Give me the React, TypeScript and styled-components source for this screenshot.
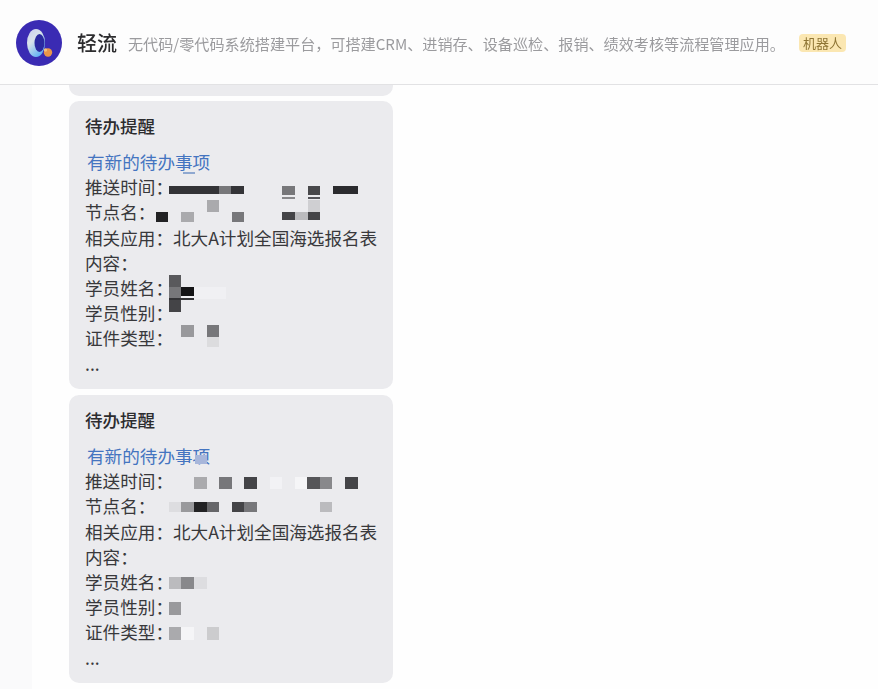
import styled, { createGlobalStyle } from 'styled-components';

type Tile = [number, number, number, number, string];

const FONT = `'Noto Sans CJK SC', 'Noto Sans', sans-serif`;

const firstTiles: Tile[] = [
  [114, 71, 12, 2, '#8fa8d0'],
  [100, 85, 50, 8, '#333336'],
  [150, 85, 12, 8, '#77777a'],
  [162, 85, 13, 8, '#343437'],
  [213, 85, 13, 9, '#77777a'],
  [239, 85, 12, 9, '#48484b'],
  [264, 85, 25, 8, '#2b2b2e'],
  [213, 96, 13, 2, '#88888b'],
  [239, 96, 12, 2, '#55555a'],
  [87, 111, 12, 10, '#222224'],
  [112, 111, 13, 10, '#aaaaad'],
  [138, 99, 12, 12, '#aaaaad'],
  [163, 111, 12, 10, '#77777a'],
  [239, 99, 12, 12, '#cfcfd2'],
  [213, 111, 13, 8, '#444447'],
  [226, 111, 13, 8, '#bbbbbe'],
  [239, 111, 12, 8, '#444447'],
  [112, 186, 45, 12, '#f0f0f3'],
  [100, 174, 12, 12, '#59595c'],
  [100, 186, 12, 13, '#77777a'],
  [112, 186, 13, 9, '#141416'],
  [100, 197, 25, 2, '#333336'],
  [100, 199, 12, 12, '#444447'],
  [112, 224, 13, 12, '#99999c'],
  [138, 224, 12, 12, '#77777a'],
  [138, 236, 12, 10, '#dcdcde'],
];

const secondTiles: Tile[] = [
  [126, 60, 12, 9, '#a7b6da'],
  [125, 82, 13, 12, '#aaaaad'],
  [150, 82, 13, 12, '#77777a'],
  [175, 82, 13, 12, '#444447'],
  [201, 82, 12, 12, '#f2f2f5'],
  [226, 82, 12, 12, '#f5f5f7'],
  [238, 82, 13, 12, '#555558'],
  [251, 82, 12, 12, '#88888b'],
  [276, 82, 13, 12, '#444447'],
  [100, 107, 12, 10, '#dddde0'],
  [112, 107, 13, 10, '#99999c'],
  [125, 107, 13, 10, '#222224'],
  [138, 107, 12, 10, '#666669'],
  [163, 107, 12, 10, '#444447'],
  [175, 107, 13, 10, '#77777a'],
  [251, 107, 12, 10, '#bbbbbe'],
  [100, 182, 12, 12, '#bbbbbe'],
  [112, 182, 13, 12, '#88888b'],
  [125, 182, 13, 12, '#dddde0'],
  [100, 207, 12, 13, '#99999c'],
  [100, 232, 12, 13, '#aaaaad'],
  [112, 232, 13, 13, '#f5f5f7'],
  [138, 232, 12, 13, '#ccccce'],
];

function Logo() {
  return (
    <svg width='46' height='46' viewBox='0 0 46 46'>
      <defs>
        <linearGradient id='ring' x1='0' y1='0' x2='0.6' y2='1'>
          <stop offset='0' stopColor='#c9cdf0' />
          <stop offset='0.45' stopColor='#d9e4ea' />
          <stop offset='1' stopColor='#63b2f4' />
        </linearGradient>
      </defs>
      <circle cx='23' cy='23' r='23' fill='#3a2bb3' />
      <ellipse cx='20' cy='23' rx='9' ry='14' fill='url(#ring)' />
      <ellipse cx='23.5' cy='23' rx='5' ry='9' fill='#2b2aa0' />
      <circle cx='32' cy='32.5' r='4.2' fill='#e9964a' />
      <circle cx='29.5' cy='30' r='1.7' fill='#f3c27c' />
    </svg>
  );
}

function ReminderCard({ tiles }: { tiles: Tile[] }) {
  return (
    <Card>
      <CardTitle>待办提醒</CardTitle>
      <CardLink>有新的待办事项</CardLink>
      <Line>推送时间：</Line>
      <Line>节点名：</Line>
      <AppLine>相关应用：北大A计划全国海选报名表</AppLine>
      <Line>内容：</Line>
      <Line>学员姓名：</Line>
      <Line>学员性别：</Line>
      <Line>证件类型：</Line>
      <Ellipsis>...</Ellipsis>
      {tiles.map(([x, y, w, h, color]) => (
        <MosaicTile
          key={`${x}-${y}-${color}`}
          style={{ left: x, top: y, width: w, height: h, background: color }}
        />
      ))}
    </Card>
  );
}

export default function App() {
  return (
    <Page>
      <GlobalStyle />
      <Header>
        <Logo />
        <AppName>轻流</AppName>
        <Description>
          无代码/零代码系统搭建平台，可搭建CRM、进销存、设备巡检、报销、绩效考核等流程管理应用。
        </Description>
        <Badge>机器人</Badge>
      </Header>
      <Body>
        <Gutter />
        <Feed>
          <PartialCard />
          <ReminderCard tiles={firstTiles} />
          <ReminderCard tiles={secondTiles} />
          <TailCard />
        </Feed>
      </Body>
    </Page>
  );
}

const GlobalStyle = createGlobalStyle`
  html, body {
    margin: 0;
    padding: 0;
    background: #fefefe;
    overflow: hidden;
  }
`;

const Page = styled.div`
  width: 878px;
  height: 689px;
  overflow: hidden;
  font-family: ${FONT};
  color: #38383b;
  filter: blur(0.35px);
`;

const Header = styled.header`
  display: flex;
  align-items: center;
  box-sizing: border-box;
  height: 85px;
  padding: 2px 0 0 16px;
  background: #fdfdfd;
  border-bottom: 1px solid #e2e2e4;
`;

const AppName = styled.h1`
  margin: 0 0 0 15px;
  font-size: 20px;
  font-weight: 500;
  line-height: 28px;
  color: #2c2c2e;
`;

const Description = styled.p`
  margin: 0 0 0 11px;
  font-size: 15.12px;
  line-height: 22px;
  color: #9b9b9e;
  white-space: nowrap;
`;

const Badge = styled.span`
  margin-left: 14px;
  padding: 0 4px;
  border-radius: 4px;
  background: #fbe7b2;
  color: #8f7534;
  font-size: 13px;
  line-height: 18px;
  white-space: nowrap;
`;

const Body = styled.main`
  display: flex;
  height: 604px;
`;

const Gutter = styled.div`
  width: 32px;
  background: #fafafb;
`;

const Feed = styled.div`
  display: flex;
  flex-direction: column;
  gap: 5px;
  width: 324px;
  margin-left: 37px;
`;

const PartialCard = styled.div`
  flex: none;
  height: 11px;
  border-radius: 0 0 10px 10px;
  background: #ebebee;
`;

const TailCard = styled.div`
  flex: none;
  height: 10px;
  border-radius: 10px 10px 0 0;
  background: #f4f4f6;
`;

const Card = styled.article`
  position: relative;
  flex: none;
  box-sizing: border-box;
  height: 288px;
  margin-bottom: 1px;
  padding: 12px 16px;
  border-radius: 10px;
  background: #ebebee;
  font-size: 17.6px;
  line-height: 25px;
`;

const CardTitle = styled.h2`
  margin: 0 0 11px;
  font-size: 17.5px;
  font-weight: 500;
  line-height: 25px;
  color: #2c2c2e;
`;

const CardLink = styled.a`
  display: block;
  padding-left: 2px;
  color: #4474c0;
`;

const Line = styled.div`
  white-space: nowrap;
`;

const AppLine = styled(Line)`
  margin-top: 1px;
`;

const Ellipsis = styled(Line)`
  margin-top: 1px;
`;

const MosaicTile = styled.i`
  position: absolute;
  display: block;
`;
